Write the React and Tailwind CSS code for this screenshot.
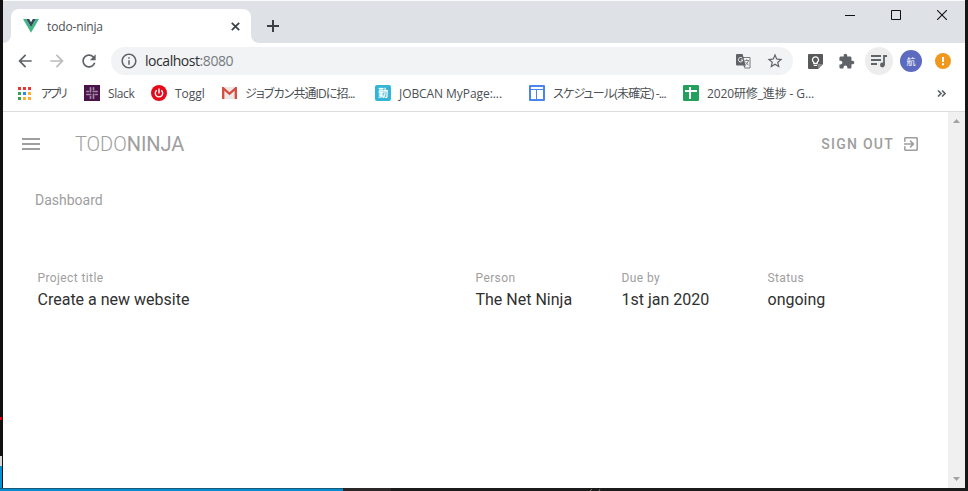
import React from "react";

const UI = "font-['Open_Sans','Noto_Sans_CJK_JP',sans-serif]";

function VueLogo() {
  return (
    <svg width="16" height="14" viewBox="0 0 16 14" className="block shrink-0">
      <path d="M0 0h3.2L8 8.3 12.8 0H16L8 13.8z" fill="#41b883" />
      <path d="M3.2 0h3L8 3.2 9.8 0h3L8 8.3z" fill="#35495e" />
    </svg>
  );
}

function Material({ d, size, color, className = "" }) {
  return (
    <svg width={size} height={size} viewBox="0 0 24 24" fill={color} className={"block shrink-0 " + className}>
      <path d={d} />
    </svg>
  );
}

function AppsIcon() {
  const colors = ["#ea3535", "#ea3535", "#ea3535", "#34a05a", "#2f8af0", "#fbaf2a", "#34a05a", "#fbaf2a", "#fbaf2a"];
  return (
    <span className="grid shrink-0 grid-cols-3 gap-[2px]">
      {colors.map((c, i) => (
        <span key={i} className="size-[3px]" style={{ background: c }} />
      ))}
    </span>
  );
}

function SlackIcon() {
  return (
    <svg width="16" height="16" viewBox="0 0 16 16" className="block shrink-0">
      <rect width="16" height="16" fill="#481449" />
      <g stroke="#a588a5" strokeWidth="1.7" strokeLinecap="round">
        <path d="M6.5 2.8v4M2.8 6.5h1.6M9.5 9.2v4M11.6 9.5h1.6M9.2 6.5h4M2.8 9.5h4M9.5 2.8v1.6M6.5 11.6v1.6" />
      </g>
    </svg>
  );
}

function TogglIcon() {
  return (
    <svg width="16" height="16" viewBox="0 0 16 16" className="block shrink-0">
      <circle cx="8" cy="8" r="8" fill="#e20a1b" />
      <path d="M8 3.5v5M5.8 5.2a3.7 3.7 0 1 0 4.4 0" fill="none" stroke="#fff" strokeWidth="1.4" />
    </svg>
  );
}

function GmailIcon() {
  return (
    <svg width="15" height="12" viewBox="0 0 15 12" className="block shrink-0">
      <rect width="15" height="12" rx="1" fill="#ece8e6" />
      <path d="M1.2 12V1.2l6.3 5.6 6.3-5.6V12" fill="none" stroke="#d54b3d" strokeWidth="2.3" />
    </svg>
  );
}

function JobcanIcon() {
  return (
    <span className="flex size-4 shrink-0 items-center justify-center rounded-[2px] bg-[#35b5d6] font-['Noto_Sans_CJK_JP',sans-serif] text-[10px] leading-none font-bold text-white">
      勤
    </span>
  );
}

function ScheduleIcon() {
  return (
    <svg width="16" height="16" viewBox="0 0 16 16" className="block shrink-0">
      <rect width="16" height="16" rx="1" fill="#4a84ee" />
      <path d="M2 2h12v2H2zM2 5h5v9H2zM8 5h6v9H8z" fill="#fff" />
    </svg>
  );
}

function SheetIcon() {
  return (
    <svg width="16" height="16" viewBox="0 0 16 16" className="block shrink-0">
      <rect width="16" height="16" rx="1" fill="#23a05c" />
      <path d="M2 5h12v2H8v7H6V7H2zM6 2h2v3H6z" fill="#fff" />
    </svg>
  );
}

function TranslateIcon() {
  return (
    <svg width="15" height="15" viewBox="0 0 15 15" className="block shrink-0">
      <path d="M7 3.5h7v10.5H8.5" fill="#f1f3f4" stroke="#777b7f" strokeWidth="1" />
      <path d="M8.5 6.5h4.5M10.7 5.3v1.2M12.3 6.5c-.3 2-1.5 3.5-3 4.5M9.5 8c.6 1.3 1.7 2.4 3 3" fill="none" stroke="#777b7f" strokeWidth=".9" />
      <path d="M1 0h5.6l3 11.5H1a1 1 0 0 1-1-1V1a1 1 0 0 1 1-1z" fill="#5f6368" />
      <path d="M6.2 4.2A2.2 2.2 0 1 0 6.8 6H4.8" fill="none" stroke="#fff" strokeWidth="1" />
      <path d="M7.2 11.5h2.4L8.5 14z" fill="#5f6368" />
    </svg>
  );
}

function KeepIcon() {
  return (
    <svg width="15" height="15" viewBox="0 0 15 15" className="block shrink-0">
      <path d="M1 0h13a1 1 0 0 1 1 1v9l-5 5H1a1 1 0 0 1-1-1V1a1 1 0 0 1 1-1z" fill="#58595b" />
      <path d="M15 10h-5v5z" fill="#8b8c8e" />
      <path d="M5.8 8.3a3 3 0 1 1 3.4 0v1.2H5.8z" fill="none" stroke="#fff" strokeWidth="1.3" />
      <path d="M5.8 11h3.4v1H5.8z" fill="#fff" />
    </svg>
  );
}

const BOOKMARKS = [
  { label: "アプリ", Icon: AppsIcon, box: "w-[66px] gap-[10px]", text: "w-[27px] tracking-[-2.7px] [font-feature-settings:'palt']" },
  { label: "Slack", Icon: SlackIcon, box: "w-[67px] gap-2", text: "tracking-[-0.4px]" },
  { label: "Toggl", Icon: TogglIcon, box: "w-[71px] gap-2", text: "tracking-[0px]" },
  { label: "ジョブカン共通IDに招...", Icon: GmailIcon, box: "w-[153px] gap-2", text: "tracking-[-0.9px] [font-feature-settings:'palt']" },
  { label: "JOBCAN MyPage:...", Icon: JobcanIcon, box: "w-[154px] gap-2", text: "tracking-[-0.07px]" },
  { label: "スケジュール(未確定) -...", Icon: ScheduleIcon, box: "w-[154px] gap-2", text: "tracking-[-0.8px] [font-feature-settings:'palt']" },
  { label: "2020研修_進捗 - G...", Icon: SheetIcon, box: "w-[150px] gap-2", text: "tracking-[-0.12px]" },
];

function TabStrip() {
  return (
    <div className="flex h-[42px] items-end bg-[#dee1e6]">
      <div className="h-2 w-2 bg-white">
        <div className="size-2 rounded-br-lg bg-[#dee1e6]" />
      </div>
      <div className="flex h-[34px] w-[240px] items-center rounded-t-lg bg-white pl-3">
        <VueLogo />
        <span className="ml-2 w-[183px] pt-px text-[12px] leading-4 tracking-[-0.15px] text-[#4c5054]">todo-ninja</span>
        <svg width="9" height="9" viewBox="0 0 9 9" className="ml-px block shrink-0">
          <path d="M.8.8l7.4 7.4M8.2.8L.8 8.2" stroke="#3c4043" strokeWidth="1.7" />
        </svg>
      </div>
      <div className="h-2 w-2 bg-white">
        <div className="size-2 rounded-bl-lg bg-[#dee1e6]" />
      </div>
      <svg width="12" height="12" viewBox="0 0 12 12" className="mb-[11px] ml-2 block">
        <path d="M6 0v12M0 6h12" stroke="#3c4043" strokeWidth="2" />
      </svg>
      <div className="mr-[18px] mb-[22px] ml-auto flex items-center gap-[36px]">
        <svg width="10" height="12" viewBox="0 0 10 12"><path d="M0 6.5h10" stroke="#111" /></svg>
        <svg width="10" height="10" viewBox="0 0 10 10"><path d="M.5.5h9v9h-9z" fill="none" stroke="#111" /></svg>
        <svg width="10" height="10" viewBox="0 0 10 10"><path d="M0 0l10 10M10 0L0 10" stroke="#111" strokeWidth="1.1" /></svg>
      </div>
    </div>
  );
}

function Toolbar() {
  return (
    <div className="flex h-9 items-center bg-white pl-[12px]">
      <Material size={20} color="#5f6368" d="M20 11H7.83l5.59-5.59L12 4l-8 8 8 8 1.41-1.41L7.83 13H20v-2z" />
      <Material size={20} color="#babcbe" className="ml-3" d="M12 4l-1.41 1.41L16.17 11H4v2h12.17l-5.58 5.59L12 20l8-8z" />
      <Material size={20} color="#5f6368" className="ml-3" d="M17.65 6.35C16.2 4.9 14.21 4 12 4c-4.42 0-7.99 3.58-7.99 8s3.57 8 7.99 8c3.73 0 6.84-2.55 7.73-6h-2.08c-.82 2.33-3.04 4-5.65 4-3.31 0-6-2.69-6-6s2.69-6 6-6c1.66 0 3.14.69 4.22 1.78L13 11h7V4l-2.35 2.35z" />
      <div className="ml-3 flex h-7 w-[682px] items-center rounded-full bg-[#f1f3f4] pl-[9px]">
        <Material size={18} color="#5f6368" d="M11 7h2v2h-2zm0 4h2v6h-2zm1-9C6.48 2 2 6.48 2 12s4.48 10 10 10 10-4.48 10-10S17.52 2 12 2zm0 18c-4.41 0-8-3.59-8-8s3.59-8 8-8 8 3.59 8 8-3.59 8-8 8z" />
        <span className="ml-[7px] text-[14px] leading-5 tracking-[-0.45px] text-[#2c2e31]">
          localhost<span className="text-[#777b7f]">:8080</span>
        </span>
        <div className="mr-[9px] ml-auto flex items-center gap-[15px]">
          <TranslateIcon />
          <Material size={18} color="#5f6368" d="M22 9.24l-7.19-.62L12 2 9.19 8.63 2 9.24l5.46 4.73L5.82 21 12 17.27 18.18 21l-1.63-7.03L22 9.24zM12 15.4l-3.76 2.27 1-4.28-3.32-2.88 4.38-.38L12 6.1l1.71 4.04 4.38.38-3.32 2.88 1 4.28L12 15.4z" />
        </div>
      </div>
      <div className="ml-[15px] flex items-center">
        <KeepIcon />
        <Material size={17} color="#5f6368" className="ml-[15px]" d="M20.5 11H19V7c0-1.1-.9-2-2-2h-4V3.5C13 2.12 11.88 1 10.5 1S8 2.12 8 3.5V5H4c-1.1 0-1.99.9-1.99 2v3.8H3.5c1.49 0 2.7 1.21 2.7 2.7s-1.21 2.7-2.7 2.7H2V20c0 1.1.9 2 2 2h3.8v-1.5c0-1.49 1.21-2.7 2.7-2.7 1.49 0 2.7 1.21 2.7 2.7V22H17c1.1 0 2-.9 2-2v-4h1.5c1.38 0 2.5-1.12 2.5-2.5S21.88 11 20.5 11z" />
        <div className="ml-[10px] flex size-7 items-center justify-center rounded-full bg-[#ededed]">
          <svg width="16" height="14" viewBox="0 0 16 14" className="block">
            <path d="M0 2h10M0 6h10M0 10h6" stroke="#5f6368" strokeWidth="1.8" />
            <path d="M13 11V2h3" fill="none" stroke="#5f6368" strokeWidth="1.8" />
            <circle cx="11.4" cy="11" r="2.4" fill="#5f6368" />
          </svg>
        </div>
        <div className="ml-[7px] flex size-[22px] items-center justify-center rounded-full bg-[#5c6bc0] font-['Noto_Sans_CJK_JP',sans-serif] text-[9px] leading-none text-white">航</div>
        <svg width="16" height="16" viewBox="0 0 16 16" className="ml-[13px] block">
          <circle cx="8" cy="8" r="8" fill="#f0981e" />
          <path d="M7 4h2v5H7zM7 10.3h2v2H7z" fill="#fff" />
        </svg>
      </div>
    </div>
  );
}

function BookmarkBar() {
  return (
    <div className="flex h-[33px] items-center border-b border-[#dadce0] bg-white pb-1 pl-[15px]">
      {BOOKMARKS.map(({ label, Icon, box, text }) => (
        <div key={label} className={"flex shrink-0 items-center " + box}>
          <Icon />
          <span className={"pt-[2px] text-[12px] leading-4 whitespace-nowrap text-[#4c5054] " + text}>{label}</span>
        </div>
      ))}
      <svg width="9" height="7" viewBox="0 0 9 7" className="mr-[19px] ml-auto block">
        <path d="M1 .5l3 3-3 3M5 .5l3 3-3 3" fill="none" stroke="#5f6368" strokeWidth="1.6" />
      </svg>
    </div>
  );
}

function Field({ label, value, width }) {
  return (
    <div className={width}>
      <div className="text-[12px] leading-5 tracking-[0.4px] text-[#9e9e9e]">{label}</div>
      <div className="text-[16px] leading-6 text-[#303030]">{value}</div>
    </div>
  );
}

function Page() {
  return (
    <main className="flex min-h-0 flex-1 bg-white font-[Roboto,sans-serif]">
      <div className="flex-1">
        <header className="flex h-16 items-center pr-[30px] pl-4 text-[#9e9e9e]">
          <Material size={24} color="#9e9e9e" d="M3 18h18v-2H3v2zm0-5h18v-2H3v2zm0-7v2h18V6H3z" />
          <h1 className="ml-8 text-[20px] leading-6 tracking-[-0.05px]"><span className="font-light">TODO</span>NINJA</h1>
          <span className="ml-auto text-[14px] leading-5 font-medium tracking-[1.25px]">SIGN OUT</span>
          <svg width="14" height="14" viewBox="3 3 18 18" fill="#9e9e9e" className="ml-[10px] block">
            <path d="M10.09 15.59L11.5 17l5-5-5-5-1.41 1.41L12.67 11H3v2h9.67l-2.58 2.59zM19 3H5c-1.11 0-2 .9-2 2v4h2V5h14v14H5v-4H3v4c0 1.1.89 2 2 2h14c1.1 0 2-.9 2-2V5c0-1.1-.9-2-2-2z" />
          </svg>
        </header>
        <h2 className="mt-3 ml-8 text-[14px] leading-6 text-[#9e9e9e]">Dashboard</h2>
        <section className="mt-14 ml-[34.5px] flex">
          <Field label="Project title" value="Create a new website" width="w-[438px]" />
          <Field label="Person" value="The Net Ninja" width="w-[146px]" />
          <Field label="Due by" value="1st jan 2020" width="w-[146px]" />
          <Field label="Status" value="ongoing" width="w-[146px]" />
        </section>
      </div>
      <div className="flex w-[17px] flex-col items-center justify-between bg-[#f0f0f0] py-[7px]">
        <svg width="7" height="4" viewBox="0 0 7 4"><path d="M0 4l3.5-4L7 4z" fill="#a3a3a3" /></svg>
        <svg width="7" height="4" viewBox="0 0 7 4"><path d="M0 0l3.5 4L7 0z" fill="#a3a3a3" /></svg>
      </div>
    </main>
  );
}

export default function App() {
  return (
    <div className={"flex h-[491px] w-[968px] flex-col overflow-hidden bg-[#1b1b1b] " + UI}>
      <div className="flex h-[488px]">
        <div className="flex w-[3px] flex-col bg-[#111]">
          <div className="mt-[417px] h-[3px] w-[2px] bg-[#e00010]" />
          <div className="mt-9 h-[10px] w-[2px] bg-[#d8d8d8]" />
          <div className="w-[2px] flex-1 bg-[#0692d4]" />
        </div>
        <div className="flex w-[962px] flex-col border-t border-[#fafafa]">
          <TabStrip />
          <Toolbar />
          <BookmarkBar />
          <Page />
        </div>
        <div className="w-[3px] bg-[#151515]" />
      </div>
      <div className="flex h-[3px]">
        <div className="w-[343px] border-t border-[#155a7b] bg-[#078bcb]" />
        <div className="w-[48px] bg-[#2b2728]" />
        <svg width="14" height="3" viewBox="0 0 14 3" className="ml-[198px] block">
          <path d="M1 3l2-2M10 3l1-2" stroke="#77746a" strokeWidth="1" />
        </svg>
      </div>
    </div>
  );
}
